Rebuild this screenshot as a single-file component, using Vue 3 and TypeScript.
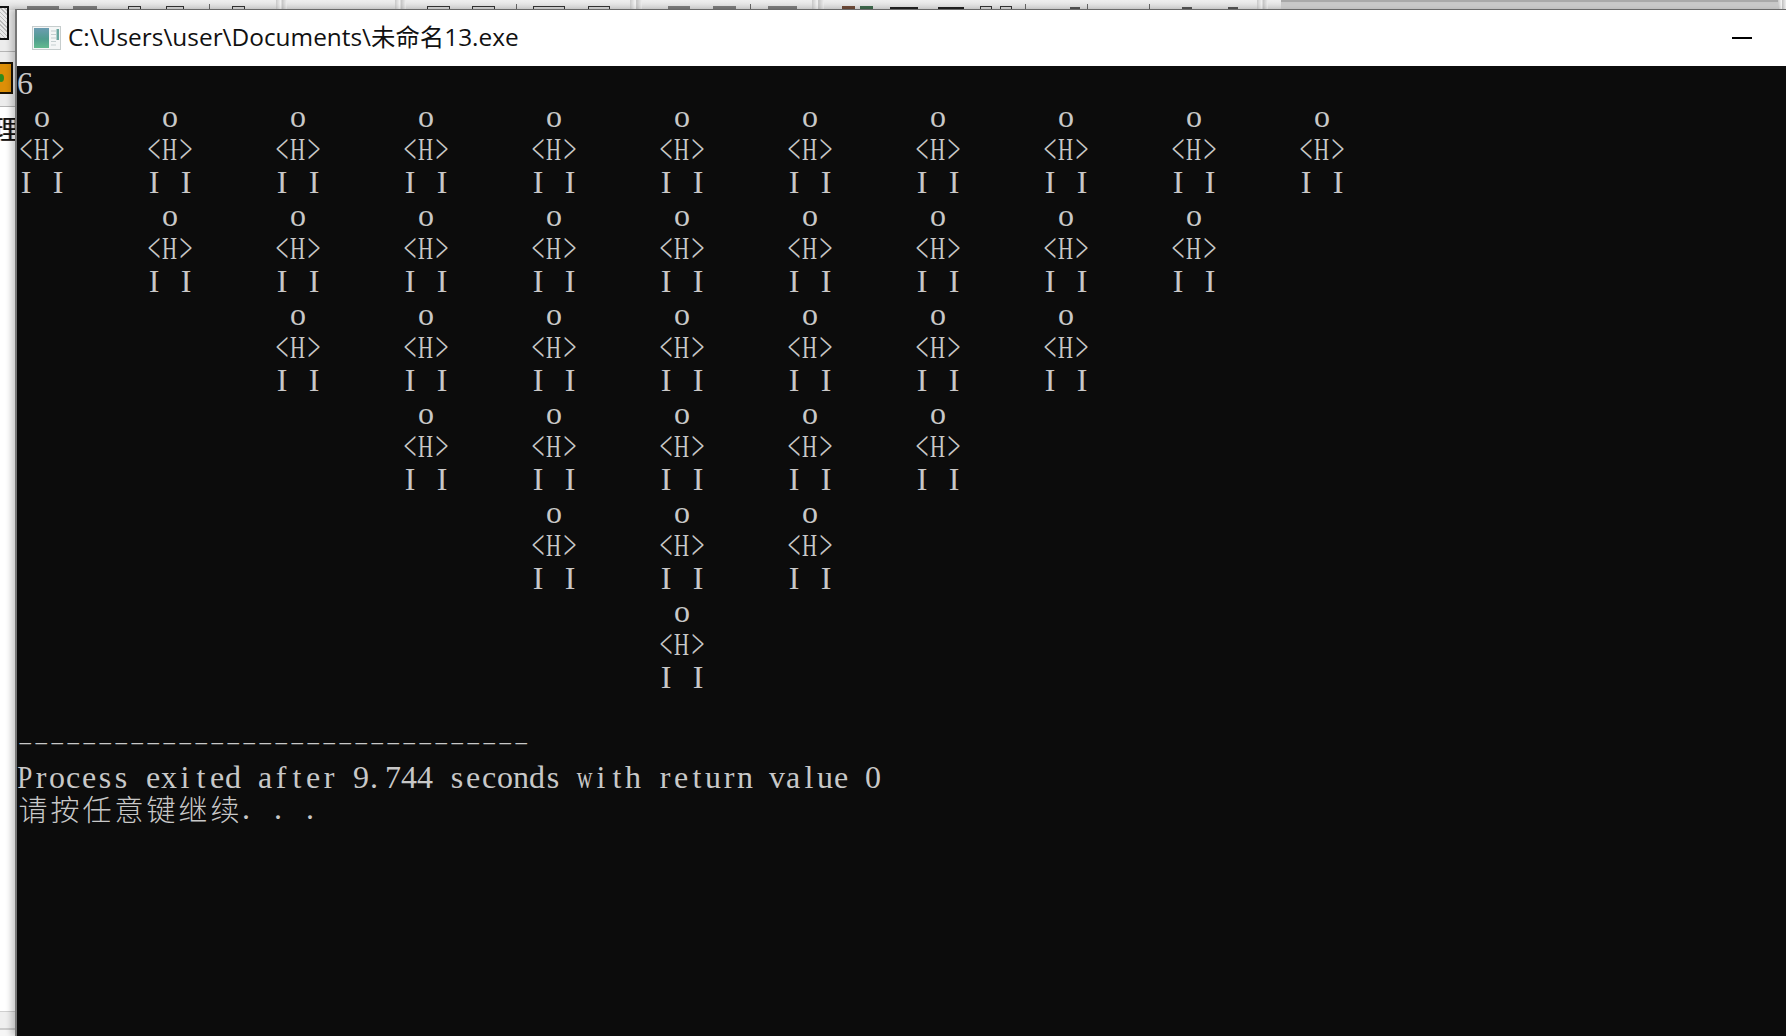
<script setup lang="ts">
type Bit = { x: number; w: number; kind: string }

const bitList: Bit[] = [
  { x: 27, w: 32, kind: 'gray' }, { x: 73, w: 24, kind: 'gray' },
  { x: 128, w: 13, kind: 'box' }, { x: 166, w: 18, kind: 'box' },
  { x: 209, w: 1, kind: 'tick' }, { x: 232, w: 13, kind: 'box' },
  { x: 276, w: 11, kind: 'grip' }, { x: 395, w: 11, kind: 'grip' },
  { x: 427, w: 23, kind: 'box' }, { x: 472, w: 23, kind: 'box' },
  { x: 516, w: 1, kind: 'tick' }, { x: 533, w: 32, kind: 'box' },
  { x: 588, w: 22, kind: 'box' }, { x: 630, w: 12, kind: 'grip' },
  { x: 668, w: 22, kind: 'gray' }, { x: 713, w: 23, kind: 'gray' },
  { x: 750, w: 1, kind: 'tick' }, { x: 768, w: 29, kind: 'gray' },
  { x: 812, w: 12, kind: 'grip' }, { x: 842, w: 13, kind: 'brown' },
  { x: 860, w: 13, kind: 'green' }, { x: 890, w: 28, kind: 'black' },
  { x: 938, w: 26, kind: 'black' }, { x: 980, w: 12, kind: 'box' },
  { x: 1000, w: 12, kind: 'box' }, { x: 1025, w: 1, kind: 'tick' },
  { x: 1070, w: 10, kind: 'peak' }, { x: 1087, w: 1, kind: 'tick' },
  { x: 1149, w: 1, kind: 'tick' }, { x: 1182, w: 10, kind: 'peak' },
  { x: 1228, w: 10, kind: 'peak' }, { x: 1257, w: 11, kind: 'grip' }
]

const bits = bitList.map((b, i) => ({
  ...b,
  gap: i === 0 ? b.x : b.x - bitList[i - 1].x - bitList[i - 1].w
}))

const counts = [1, 2, 3, 4, 5, 6, 5, 4, 3, 2, 1]
const figure = [' o ', '<H>', 'I I']

function figureRow(row: number): string {
  const art = figure[row % 3]
  const level = Math.floor(row / 3)
  return counts.map((c) => (level < c ? art : '   ').padEnd(8, ' ')).join('').trimEnd()
}

const textLines: string[] = [
  '6',
  ...Array.from({ length: 18 }, (_, i) => figureRow(i)),
  '',
  '-'.repeat(32),
  'Process exited after 9.744 seconds with return value 0',
  '请按任意键继续. . .'
]

function glyphClass(ch: string): string {
  if (ch === 'H') return 'g-h'
  if (ch === '<' || ch === '>') return 'g-angle'
  if (ch === 'P') return 'g-p'
  if (ch === 'm' || ch === 'w') return 'g-wide'
  if (ch === '-') return 'g-dash'
  if (ch === '.') return 'g-dot'
  return ''
}

const lines = textLines.map((text, index) => ({
  figure: index >= 1 && index <= 18,
  status: text.startsWith('Process'),
  cells: Array.from(text).map((ch) => ({
    ch,
    wide: ch.charCodeAt(0) > 255,
    cls: glyphClass(ch)
  }))
}))
</script>

<template>
  <div class="screen">
    <div class="strip">
      <i
        v-for="(b, i) in bits"
        :key="i"
        class="bit"
        :class="b.kind"
        :style="{ marginLeft: b.gap + 'px', width: b.w + 'px' }"
      ></i>
      <div class="panel"></div>
      <i class="bit grip end"></i>
    </div>

    <div class="side">
      <div class="side-row first">
        <div class="dotted"></div>
      </div>
      <div class="side-row second">
        <div class="run"><span class="run-dot"></span></div>
      </div>
      <div class="side-main">
        <span class="clip-text">理</span>
      </div>
      <div class="side-foot"></div>
    </div>

    <section class="window">
      <header class="title">
        <svg class="app-icon" width="29" height="26" viewBox="0 0 29 26">
          <defs>
            <linearGradient id="pane" x1="0" y1="0" x2="0" y2="1">
              <stop offset="0" stop-color="#6c9cb2" />
              <stop offset="0.55" stop-color="#4f9c8e" />
              <stop offset="1" stop-color="#62ba8e" />
            </linearGradient>
          </defs>
          <rect x="0.5" y="1.5" width="28" height="23" fill="#f4f6f6" stroke="#c6cdcd" />
          <rect x="2" y="3" width="15" height="20" fill="url(#pane)" />
          <path d="M19 6h5M19 9.500h5M19 13h5M19 16.500h5M19 20h5" stroke="#c5cfd0" stroke-width="1" />
          <rect x="24.500" y="4" width="2.500" height="11" fill="#6aa7a0" />
        </svg>
        <span class="title-text">C:\Users\user\Documents\未命名13.exe</span>
        <span class="minimize"></span>
      </header>
      <main class="console">
        <div
          v-for="(line, i) in lines"
          :key="i"
          class="line"
          :class="{ 'figure-line': line.figure, 'status-line': line.status }"
        >
          <span
            v-for="(c, j) in line.cells"
            :key="j"
            class="cell"
            :class="{ wide: c.wide }"
          ><span class="glyph" :class="c.cls">{{ c.ch === ' ' ? '' : c.ch }}</span></span>
        </div>
      </main>
    </section>
  </div>
</template>

<style scoped>
.screen {
  position: relative;
  width: 1786px;
  height: 1036px;
  overflow: hidden;
  background: #f6f6f6;
}

.strip {
  display: flex;
  align-items: flex-end;
  height: 10px;
  background: linear-gradient(#efefef, #d9d9d9);
}

.bit {
  display: block;
  flex: none;
  height: 4px;
  box-sizing: border-box;
}

.gray {
  background: #7c7c7c;
}

.box {
  border: 1px solid #333;
  border-bottom: 0;
  background: #d5d5d5;
}

.tick {
  height: 6px;
  background: #666;
}

.grip {
  height: 10px;
  background: linear-gradient(90deg, #c9c9c9, #f4f4f4 45%, #c4c4c4 55%, #efefef);
}

.brown {
  background: #6e4a38;
}

.green {
  background: #3f6a4c;
}

.black {
  height: 3px;
  background: #222;
}

.peak {
  height: 3px;
  background: #555;
}

.panel {
  flex: 1;
  height: 10px;
  margin-left: 13px;
  box-sizing: border-box;
  border-top: 2px solid #a9a9a9;
  background: linear-gradient(#c6c6c6, #d6d6d6);
}

.end {
  width: 8px;
}

.side {
  display: flex;
  flex-direction: column;
  width: 15px;
  height: 1026px;
}

.side-row {
  flex: none;
  background: #ececec;
  border-bottom: 1px solid #b5b5b5;
}

.first {
  height: 41px;
}

.dotted {
  width: 7px;
  height: 30px;
  margin-top: -4px;
  border: 1px solid #111;
  border-left: 0;
  border-width: 2px 2px 2px 0;
  background: repeating-linear-gradient(45deg, #bbb 0 1px, #e9e9e9 1px 3px);
}

.second {
  height: 55px;
  padding-top: 10px;
  box-sizing: border-box;
}

.run {
  position: relative;
  width: 11px;
  height: 28px;
  border: 2px solid #1a1206;
  border-left: 0;
  background: #dd8f08;
}

.run-dot {
  position: absolute;
  right: 7px;
  top: 10px;
  width: 6px;
  height: 8px;
  border-radius: 50%;
  background: #2f8a1c;
}

.side-main {
  flex: 1;
  overflow: hidden;
  background: #fff;
}

.clip-text {
  display: block;
  width: 26px;
  margin: 4px 0 0 -7px;
  font: 26px/34px "Noto Sans CJK SC", sans-serif;
  color: #111;
  text-shadow: 1px 0 rgba(200, 110, 40, 0.55), -1px 0 rgba(40, 110, 200, 0.45);
}

.side-foot {
  flex: none;
  height: 16px;
  margin-bottom: 6px;
  border-top: 1px solid #cfcfcf;
  border-bottom: 2px solid #cbcbcb;
  background: #efefef;
}

.window {
  position: absolute;
  left: 15px;
  top: 9px;
  right: 0;
  bottom: 0;
  display: flex;
  flex-direction: column;
  border-top: 1px solid #6a6a6a;
  border-left: 2px solid #777;
  box-shadow: -4px 0 6px rgba(0, 0, 0, 0.2);
  background: #fff;
}

.title {
  flex: none;
  display: flex;
  align-items: center;
  height: 56px;
  padding: 0 34px 0 15px;
  box-sizing: border-box;
  background: #fff;
}

.app-icon {
  flex: none;
  margin-right: 7px;
}

.title-text {
  flex: 1;
  margin-bottom: 2px;
  font: 24.4px/32px "Open Sans", "Noto Sans CJK SC", sans-serif;
  color: #111;
}

.minimize {
  flex: none;
  width: 20px;
  height: 2px;
  background: #000;
}

.console {
  flex: 1;
  background: #0c0c0c;
  color: #c8c8c8;
  font: 32px/33px "Liberation Serif", "Noto Sans CJK SC", serif;
  font-weight: 400;
}

.line {
  display: flex;
  height: 33px;
}

.figure-line {
  padding-left: 1px;
}

.cell {
  flex: none;
  display: flex;
  justify-content: center;
  width: 16px;
  height: 33px;
}

.cell.wide {
  width: 32px;
  font-family: "Noto Sans CJK SC", sans-serif;
  font-size: 29px;
  font-weight: 300;
}

.glyph {
  display: block;
  flex: none;
  margin-top: 1px;
}

.status-line .glyph {
  margin-top: 2px;
}

.cell.wide .glyph {
  margin-top: 0;
}

.g-h {
  transform: scaleX(0.65);
}

.g-angle {
  transform: scale(0.72, 1.3);
}

.g-p {
  transform: scaleX(0.85);
}

.g-wide {
  transform: scaleX(0.68);
}

.glyph.g-dash {
  margin-top: 0;
  transform: scale(1.4, 0.5);
}

.g-dot {
  transform: translateX(-3px);
}

.line:last-child .g-dot {
  margin-top: 0;
}
</style>
